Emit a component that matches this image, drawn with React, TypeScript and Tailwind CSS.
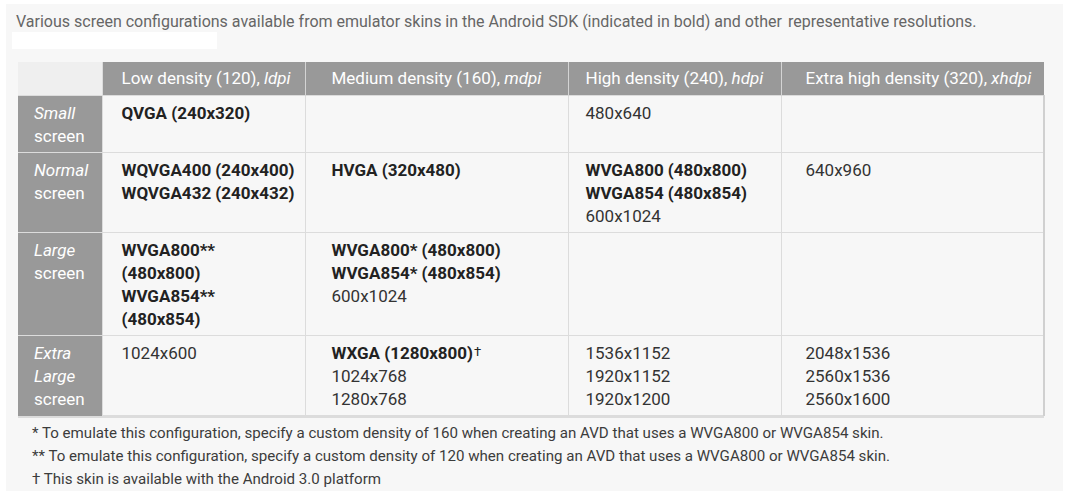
const rows: { label: [string, ...string[]]; cells: { b?: string[]; n?: string[]; dagger?: boolean }[] }[] = [
  {
    label: ["Small", "screen"],
    cells: [{ b: ["QVGA (240x320)"] }, {}, { n: ["480x640"] }, {}],
  },
  {
    label: ["Normal", "screen"],
    cells: [
      { b: ["WQVGA400 (240x400)", "WQVGA432 (240x432)"] },
      { b: ["HVGA (320x480)"] },
      { b: ["WVGA800 (480x800)", "WVGA854 (480x854)"], n: ["600x1024"] },
      { n: ["640x960"] },
    ],
  },
  {
    label: ["Large", "screen"],
    cells: [
      { b: ["WVGA800**", "(480x800)", "WVGA854**", "(480x854)"] },
      { b: ["WVGA800* (480x800)", "WVGA854* (480x854)"], n: ["600x1024"] },
      {},
      {},
    ],
  },
  {
    label: ["Extra", "Large", "screen"],
    cells: [
      { n: ["1024x600"] },
      { b: ["WXGA (1280x800)"], dagger: true, n: ["1024x768", "1280x768"] },
      { n: ["1536x1152", "1920x1152", "1920x1200"] },
      { n: ["2048x1536", "2560x1536", "2560x1600"] },
    ],
  },
];

const pads = ["pl-[19px]", "pl-[26px]", "pl-[17px]", "pl-[24px]"];

export default function App() {
  return (
    <div className="w-[1070px] h-[495px] bg-white pt-[4px] pl-[6px] font-['Roboto',sans-serif]">
      <div className="w-[1057px] h-[487px] bg-[#f7f7f7] flex flex-col">
        <p className="pl-[10px] pt-[6px] h-[28px] text-[16px] leading-[24px] text-[#666]">
          Various screen configurations available from emulator skins in the Android SDK (indicated in bold) and other
          <span className="ml-[6px]">representative resolutions.</span>
        </p>
        <div className="ml-[6px] w-[205px] h-[21px] bg-white" />
        <table className="mt-[13px] ml-[12px] w-[1026px] table-fixed border-collapse text-[17px] leading-[23px]">
          <colgroup>
            <col className="w-[84px]" />
            <col className="w-[203px]" />
            <col className="w-[263px]" />
            <col className="w-[213px]" />
            <col className="w-[263px]" />
          </colgroup>
          <thead>
            <tr className="h-[34px]">
              <th className="bg-[#efefef] border-r border-[#dcdcdc]" />
              {[
                ["Low density (120), ", "ldpi"],
                ["Medium density (160), ", "mdpi"],
                ["High density (240), ", "hdpi"],
                ["Extra high density (320), ", "xhdpi"],
              ].map(([t, i], k) => (
                <th
                  key={k}
                  className={`bg-[#999] text-white font-normal text-left align-middle border-r border-[#d4d4d4] last:border-r-0 ${pads[k]}`}
                >
                  {t}
                  <i>{i}</i>
                </th>
              ))}
            </tr>
          </thead>
          <tbody>
            {rows.map((r, ri) => (
              <tr key={ri}>
                <td className="bg-[#999] text-white align-top pl-[16px] pt-[6px] pb-[4px] border-t border-[#dcdcdc]">
                  <i>{r.label[0]}</i>
                  {r.label.slice(1).map((l, li) =>
                    l === "Large" ? (
                      <i key={li} className="block">
                        {l}
                      </i>
                    ) : (
                      <span key={li} className="block">
                        {l}
                      </span>
                    )
                  )}
                </td>
                {r.cells.map((c, ci) => (
                  <td
                    key={ci}
                    className={`align-top pt-[6px] pb-[4px] border border-[#dcdcdc] last:border-r-2 last:border-r-[#d0d0d0] ${pads[ci]}`}
                  >
                    {c.b?.map((t, ti) => (
                      <div key={ti} className="font-bold text-[#222]">
                        {t}
                        {c.dagger && (
                          <sup className="font-normal text-[13px] text-[#222] relative -top-[3px] ml-[1px]">†</sup>
                        )}
                      </div>
                    ))}
                    {c.n?.map((t, ti) => (
                      <div key={ti} className="text-[#333]">
                        {t}
                      </div>
                    ))}
                  </td>
                ))}
              </tr>
            ))}
            <tr className="h-0">
              <td className="border-b-2 border-[#dcdcdc] p-0" colSpan={5} />
            </tr>
          </tbody>
        </table>
        <div className="mt-[4px] pl-[26px] text-[15.1px] leading-[23px] text-[#3c3c3c]">
          <p>* To emulate this configuration, specify a custom density of 160 when creating an AVD that uses a WVGA800 or WVGA854 skin.</p>
          <p>** To emulate this configuration, specify a custom density of 120 when creating an AVD that uses a WVGA800 or WVGA854 skin.</p>
          <p>† This skin is available with the Android 3.0 platform</p>
        </div>
      </div>
    </div>
  );
}
